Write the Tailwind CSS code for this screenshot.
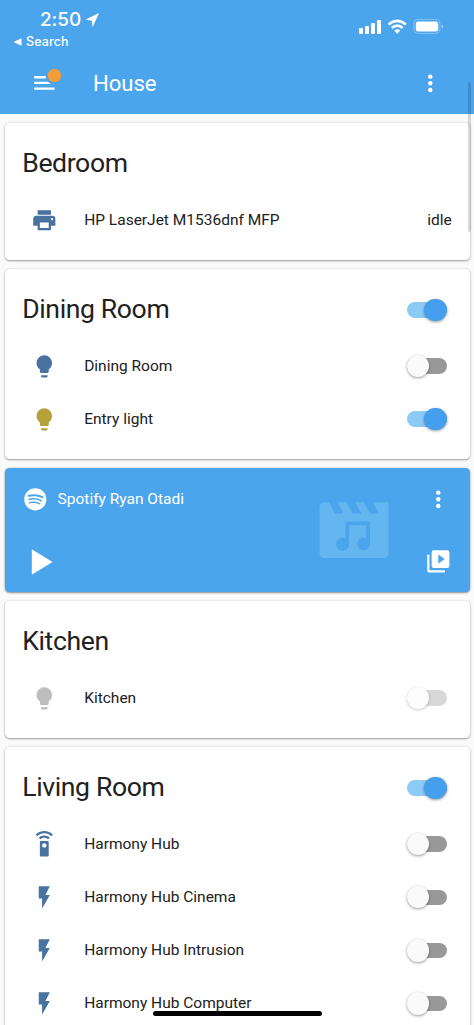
<!DOCTYPE html>
<html lang="en">
<head>
<meta charset="utf-8">
<title>House</title>
<script src="https://cdn.jsdelivr.net/npm/@tailwindcss/browser@4"></script>
</head>
<body class="relative h-[1025px] w-[474px] overflow-hidden bg-[#fafafa] font-[Roboto,sans-serif] text-[15.5px] text-[#212121]">
<svg class="hidden">
  <symbol id="printer" viewBox="0 0 24 24"><path d="M18,3H6V7H18M19,12A1,1 0 0,1 18,11A1,1 0 0,1 19,10A1,1 0 0,1 20,11A1,1 0 0,1 19,12M16,19H8V14H16M19,8H5A3,3 0 0,0 2,11V17H6V21H18V17H22V11A3,3 0 0,0 19,8Z"/></symbol>
  <symbol id="bulb" viewBox="0 0 24 24"><path d="M12,2A7,7 0 0,0 5,9C5,11.38 6.19,13.47 8,14.74V17A1,1 0 0,0 9,18H15A1,1 0 0,0 16,17V14.74C17.81,13.47 19,11.38 19,9A7,7 0 0,0 12,2M9,21A1,1 0 0,0 10,22H14A1,1 0 0,0 15,21V20H9V21Z"/></symbol>
  <symbol id="flash" viewBox="0 0 24 24"><path d="M7,2V13H10V22L17,10H13L17,2H7Z"/></symbol>
  <symbol id="remote" viewBox="0 0 24 24"><path d="M12,0C8.96,0 6.21,1.23 4.22,3.22L5.63,4.63C7.26,3 9.5,2 12,2C14.5,2 16.74,3 18.36,4.64L19.77,3.23C17.79,1.23 15.04,0 12,0M7.05,6.05L8.46,7.46C9.37,6.56 10.62,6 12,6C13.38,6 14.63,6.56 15.54,7.46L16.95,6.05C15.68,4.78 13.93,4 12,4C10.07,4 8.32,4.78 7.05,6.05M12,15A2,2 0 0,1 10,13A2,2 0 0,1 12,11A2,2 0 0,1 14,13A2,2 0 0,1 12,15M15,9H9A1,1 0 0,0 8,10V22A1,1 0 0,0 9,23H15A1,1 0 0,0 16,22V10A1,1 0 0,0 15,9Z"/></symbol>
  <symbol id="spotify" viewBox="0 0 24 24"><path d="M17.9,10.9C14.7,9 9.35,8.8 6.3,9.75C5.8,9.9 5.3,9.6 5.15,9.15C5,8.65 5.3,8.15 5.75,8C9.3,6.95 15.15,7.15 18.85,9.35C19.3,9.6 19.45,10.2 19.2,10.65C18.95,11 18.35,11.15 17.9,10.9M17.8,13.7C17.55,14.05 17.1,14.2 16.75,13.95C14.05,12.3 9.95,11.8 6.8,12.8C6.4,12.9 5.95,12.7 5.85,12.3C5.75,11.9 5.95,11.45 6.35,11.35C10,10.25 14.5,10.8 17.6,12.7C17.9,12.85 18.05,13.35 17.8,13.7M16.6,16.45C16.4,16.75 16.05,16.85 15.75,16.65C13.4,15.2 10.45,14.9 6.95,15.7C6.6,15.8 6.3,15.55 6.2,15.25C6.1,14.9 6.35,14.6 6.65,14.5C10.45,13.65 13.75,14 16.35,15.6C16.7,15.75 16.75,16.15 16.6,16.45M12,2A10,10 0 0,0 2,12A10,10 0 0,0 12,22A10,10 0 0,0 22,12A10,10 0 0,0 12,2Z"/></symbol>
  <symbol id="dots" viewBox="0 0 24 24"><path d="M12,16A2,2 0 0,1 14,18A2,2 0 0,1 12,20A2,2 0 0,1 10,18A2,2 0 0,1 12,16M12,10A2,2 0 0,1 14,12A2,2 0 0,1 12,14A2,2 0 0,1 10,12A2,2 0 0,1 12,10M12,4A2,2 0 0,1 14,6A2,2 0 0,1 12,8A2,2 0 0,1 10,6A2,2 0 0,1 12,4Z"/></symbol>
</svg>

<header class="h-[114px] bg-[#4ba5ed] text-white">
  <div class="flex h-[52px] items-start justify-between">
    <div class="pt-[8px] pl-[13px] font-[Inter,sans-serif]">
      <div class="flex h-[24px] items-center gap-[5px] pl-[27px]">
        <span class="text-[19px] leading-[24px] font-medium tracking-[-0.1px]">2:50</span>
        <svg class="h-[14px] w-[13px]" viewBox="0 0 13 14" fill="white" stroke="white" stroke-width=".8" stroke-linejoin="round"><path d="M12.4 .7L.6 6.5L6.2 7.3L6.6 13.2Z"/></svg>
      </div>
      <div class="flex h-[18px] items-center gap-[4px] pt-px">
        <svg class="h-[8px] w-[9px]" viewBox="0 0 9 8" fill="white"><path d="M.5 4L8.5 .2V7.8Z"/></svg>
        <span class="text-[12.5px] leading-[18px] font-medium tracking-[0.1px]">Search</span>
      </div>
    </div>
    <svg class="mt-[18px] mr-[28px] h-[18px] w-[88px]" viewBox="0 0 88 18" fill="white">
      <rect x="1" y="10" width="4" height="6" rx="1"/><rect x="7" y="8" width="4" height="8" rx="1"/><rect x="13" y="5" width="4" height="11" rx="1"/><rect x="19" y="2" width="4" height="14" rx="1"/>
      <g fill="none" stroke="white" stroke-width="2.6"><path d="M30.6 6.6Q39.2 -1 47.8 6.6"/><path d="M33.8 10Q39.2 5.2 44.6 10"/></g>
      <path d="M36.2 12.4Q39.2 10 42.2 12.4L39.2 15.7Z"/>
      <rect x="55.9" y="1.4" width="26" height="14" rx="4" fill="none" stroke="white" stroke-opacity=".3"/>
      <rect x="57.8" y="3.6" width="22.4" height="9.8" rx="2.2"/>
      <path d="M83.6 6.5Q85.2 7 85.2 8.6Q85.2 10.1 83.6 10.6Z" fill-opacity=".5"/>
    </svg>
  </div>
  <div class="flex h-[62px] items-center pr-[30.5px] pl-[31px]">
    <svg class="h-[32px] w-[32px]" viewBox="0 0 32 32" fill="white"><path d="M3.2 9.1H14.8V11.5H3.2ZM3.2 14.7H17Q18.5 16.5 20.5 17H3.2ZM3.2 20.4H23.5V22.8H3.2Z"/><circle cx="23.4" cy="8.5" r="6.7" fill="#f29d38"/></svg>
    <h1 class="ml-[30px] flex-1 text-[22.15px] leading-[30px] tracking-[-0.05px]">House</h1>
    <svg class="h-[26.6px] w-[26.6px]" fill="white"><use href="#dots"/></svg>
  </div>
</header>

<main class="flex flex-col gap-[8.8px] px-[4.5px] pt-[8.6px]">
  <section class="h-[137.3px] rounded-[4.5px] bg-white px-[17.7px] shadow-[0_1px_2px_rgba(0,0,0,0.35),0_0_3px_rgba(0,0,0,0.12)]">
    <div class="flex h-[75.2px] items-center pt-[5px]"><h2 class="text-[26.6px] leading-[40px] tracking-[-0.38px]">Bedroom</h2></div>
    <div class="flex h-[44.3px] items-center pl-[8.8px]"><svg class="h-[26.6px] w-[26.6px]" fill="#4872a0"><use href="#printer"/></svg><span class="ml-[26.6px] flex-1 pt-[1.4px]">HP LaserJet M1536dnf MFP</span><span class="pt-[1.4px]">idle</span></div>
  </section>

  <section class="h-[190.4px] rounded-[4.5px] bg-white px-[17.7px] shadow-[0_1px_2px_rgba(0,0,0,0.35),0_0_3px_rgba(0,0,0,0.12)]">
    <div class="flex h-[75.2px] items-center justify-between pt-[5px]"><h2 class="text-[26.6px] leading-[40px] tracking-[-0.38px]">Dining Room</h2>
      <div class="mt-[2px] mr-[5.1px] flex h-[15.5px] w-[40px] items-center justify-end rounded-full bg-[#8ccbf5]"><i class="size-[22.4px] shrink-0 rounded-full bg-[#459fee] shadow-[0_1px_3px_rgba(0,0,0,0.4)]"></i></div></div>
    <div class="flex flex-col gap-[8.9px]">
      <div class="flex h-[44.3px] items-center pl-[8.8px]"><svg class="h-[26.6px] w-[26.6px]" fill="#4872a0"><use href="#bulb"/></svg><span class="ml-[26.6px] flex-1 pt-[1.4px]">Dining Room</span><div class="mr-[5.1px] flex h-[15.5px] w-[40px] items-center rounded-full bg-[#999]"><i class="size-[22.4px] shrink-0 rounded-full bg-[#fafafa] shadow-[0_1px_3px_rgba(0,0,0,0.4)]"></i></div></div>
      <div class="flex h-[44.3px] items-center pl-[8.8px]"><svg class="h-[26.6px] w-[26.6px]" fill="#b6a13b"><use href="#bulb"/></svg><span class="ml-[26.6px] flex-1">Entry light</span><div class="mr-[5.1px] flex h-[15.5px] w-[40px] items-center justify-end rounded-full bg-[#8ccbf5]"><i class="size-[22.4px] shrink-0 rounded-full bg-[#459fee] shadow-[0_1px_3px_rgba(0,0,0,0.4)]"></i></div></div>
    </div>
  </section>

  <section class="flex h-[124px] justify-between rounded-[4.5px] bg-[#4ba5ed] text-white shadow-[0_1px_2px_rgba(0,0,0,0.4),0_0_3px_rgba(0,0,0,0.12)]">
    <div class="flex flex-col pt-[17.7px] pl-[17.7px]">
      <div class="flex h-[26.6px] items-center"><svg class="h-[26.6px] w-[26.6px]" fill="white"><use href="#spotify"/></svg><span class="ml-[8.8px] pt-[1.2px]">Spotify Ryan Otadi</span></div>
      <svg class="mt-[35.5px] ml-[9px] h-[28px] w-[22px]" viewBox="0 0 22 28" fill="white"><path d="M.8 1.2L21.5 14L.8 26.8Z"/></svg>
    </div>
    <div class="flex pt-[17.9px] pr-[17.5px]">
      <svg class="mt-[15.6px] mr-[36.9px] h-[58px] w-[70px]" viewBox="0 0 70 58">
        <path fill="#63b6ef" d="M5.5 1.3H10L16.2 12.6H24.5L18.3 1.3H27.5L33.7 12.6H42.5L36 1.3H45L51.3 12.6H60L54 1.3H69.5V52Q69.5 57 64.5 57H5.5Q.5 57 .5 52V6Q.5 2 5.5 1.3Z"/>
        <path fill="#4ba5ed" d="M26.4 20.5H51V43A6.4 6.4 0 1 1 47.2 37V24.2H30.2V43A6.6 6.6 0 1 1 26.4 37.2Z"/>
      </svg>
      <div class="flex flex-col gap-[35.7px]">
        <svg class="h-[26.6px] w-[26.6px]" fill="white"><use href="#dots"/></svg>
        <svg class="h-[26.6px] w-[26.6px]" viewBox="0 0 24 24" fill="white"><path d="M4,6H2V20A2,2 0 0,0 4,22H18V20H4V6M20,2H8A2,2 0 0,0 6,4V16A2,2 0 0,0 8,18H20A2,2 0 0,0 22,16V4A2,2 0 0,0 20,2M12,14.2V5.8L17.8,10"/></svg>
      </div>
    </div>
  </section>

  <section class="h-[137.3px] rounded-[4.5px] bg-white px-[17.7px] shadow-[0_1px_2px_rgba(0,0,0,0.35),0_0_3px_rgba(0,0,0,0.12)]">
    <div class="flex h-[75.2px] items-center pt-[5px]"><h2 class="text-[26.6px] leading-[40px] tracking-[-0.38px]">Kitchen</h2></div>
    <div class="flex h-[44.3px] items-center pl-[8.8px]"><svg class="h-[26.6px] w-[26.6px]" fill="#bdbdbd"><use href="#bulb"/></svg><span class="ml-[26.6px] flex-1 pt-[1.4px]">Kitchen</span><div class="mr-[5.1px] flex h-[15.5px] w-[40px] items-center rounded-full bg-[#d8d8d8]"><i class="size-[22.4px] shrink-0 rounded-full bg-[#fdfdfd] shadow-[0_1px_3px_rgba(0,0,0,0.22)]"></i></div></div>
  </section>

  <section class="h-[320px] shrink-0 rounded-[4.5px] bg-white px-[17.7px] shadow-[0_1px_2px_rgba(0,0,0,0.35),0_0_3px_rgba(0,0,0,0.12)]">
    <div class="flex h-[75.2px] items-center justify-between pt-[5px]"><h2 class="text-[26.6px] leading-[40px] tracking-[-0.38px]">Living Room</h2>
      <div class="mt-[2px] mr-[5.1px] flex h-[15.5px] w-[40px] items-center justify-end rounded-full bg-[#8ccbf5]"><i class="size-[22.4px] shrink-0 rounded-full bg-[#459fee] shadow-[0_1px_3px_rgba(0,0,0,0.4)]"></i></div></div>
    <div class="flex flex-col gap-[8.9px]">
      <div class="flex h-[44.3px] items-center pl-[8.8px]"><svg class="h-[26.6px] w-[26.6px]" fill="#4872a0"><use href="#remote"/></svg><span class="ml-[26.6px] flex-1 pt-[1.4px]">Harmony Hub</span><div class="mr-[5.1px] flex h-[15.5px] w-[40px] items-center rounded-full bg-[#999]"><i class="size-[22.4px] shrink-0 rounded-full bg-[#fafafa] shadow-[0_1px_3px_rgba(0,0,0,0.4)]"></i></div></div>
      <div class="flex h-[44.3px] items-center pl-[8.8px]"><svg class="h-[26.6px] w-[26.6px]" fill="#4872a0"><use href="#flash"/></svg><span class="ml-[26.6px] flex-1">Harmony Hub Cinema</span><div class="mr-[5.1px] flex h-[15.5px] w-[40px] items-center rounded-full bg-[#999]"><i class="size-[22.4px] shrink-0 rounded-full bg-[#fafafa] shadow-[0_1px_3px_rgba(0,0,0,0.4)]"></i></div></div>
      <div class="flex h-[44.3px] items-center pl-[8.8px]"><svg class="h-[26.6px] w-[26.6px]" fill="#4872a0"><use href="#flash"/></svg><span class="ml-[26.6px] flex-1">Harmony Hub Intrusion</span><div class="mr-[5.1px] flex h-[15.5px] w-[40px] items-center rounded-full bg-[#999]"><i class="size-[22.4px] shrink-0 rounded-full bg-[#fafafa] shadow-[0_1px_3px_rgba(0,0,0,0.4)]"></i></div></div>
      <div class="flex h-[44.3px] items-center pl-[8.8px]"><svg class="h-[26.6px] w-[26.6px]" fill="#4872a0"><use href="#flash"/></svg><span class="ml-[26.6px] flex-1">Harmony Hub Computer</span><div class="mr-[5.1px] flex h-[15.5px] w-[40px] items-center rounded-full bg-[#999]"><i class="size-[22.4px] shrink-0 rounded-full bg-[#fafafa] shadow-[0_1px_3px_rgba(0,0,0,0.4)]"></i></div></div>
    </div>
  </section>
</main>

<!-- scroll indicator and home bar -->
<div class="absolute top-[82px] right-[3px] h-[150px] w-[3px] rounded-full bg-black/15"></div>
<div class="absolute top-[1010.5px] left-[152.5px] h-[5.5px] w-[169.5px] rounded-full bg-black"></div>
</body>
</html>
